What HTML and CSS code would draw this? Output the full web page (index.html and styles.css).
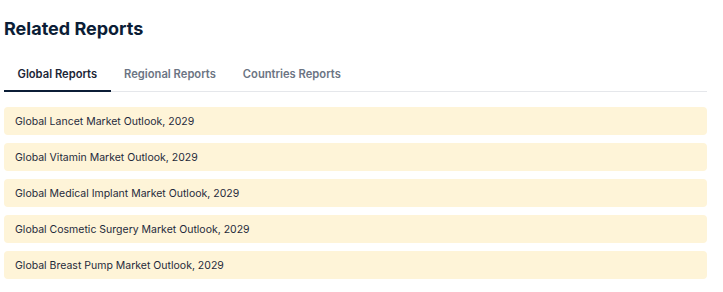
FILE: index.html
```html
<!DOCTYPE html>
<html lang="en">
<head>
<meta charset="utf-8">
<title>Related Reports</title>
<link rel="stylesheet" href="styles.css">
</head>
<body>
<section class="related">
  <h2 class="related__title">Related Reports</h2>
  <nav class="tabs">
    <a class="tab tab--active">Global Reports</a>
    <a class="tab">Regional Reports</a>
    <a class="tab">Countries Reports</a>
  </nav>
  <ul class="reports">
    <li class="report">Global Lancet Market Outlook, 2029</li>
    <li class="report">Global Vitamin Market Outlook, 2029</li>
    <li class="report">Global Medical Implant Market Outlook, 2029</li>
    <li class="report">Global Cosmetic Surgery Market Outlook, 2029</li>
    <li class="report">Global Breast Pump Market Outlook, 2029</li>
  </ul>
</section>
</body>
</html>
```
FILE: styles.css
```css
* { box-sizing: border-box; }
html, body { margin: 0; padding: 0; background: #ffffff; }
body {
  font-family: Inter, "Noto Sans", sans-serif;
  color: #0b1d36;
}
.related {
  width: 703px;
  margin-left: 4px;
  padding-top: 17px;
}
.related__title {
  margin: 0;
  font-size: 18px;
  line-height: 24px;
  font-weight: 700;
  color: #0b1d36;
}
.tabs {
  display: flex;
  margin-top: 24px;
  border-bottom: 1px solid #e5e7eb;
}
.tab {
  display: block;
  padding: 2px 13.5px 0 13.5px;
  height: 27px;
  line-height: 15px;
  font-size: 11.2px;
  font-weight: 600;
  color: #6b7483;
  margin-bottom: -1px;
  border-bottom: 2px solid transparent;
}
.tab--active {
  color: #1b2536;
  border-bottom-color: #0b1d36;
}
.reports {
  list-style: none;
  margin: 15px 0 0 0;
  padding: 0;
  display: flex;
  flex-direction: column;
  gap: 8px;
}
.report {
  height: 28px;
  display: flex;
  align-items: center;
  padding-left: 11px;
  background: #fef4d8;
  border-radius: 4px;
  font-size: 10.5px;
  color: #1e2a3b;
}
```
